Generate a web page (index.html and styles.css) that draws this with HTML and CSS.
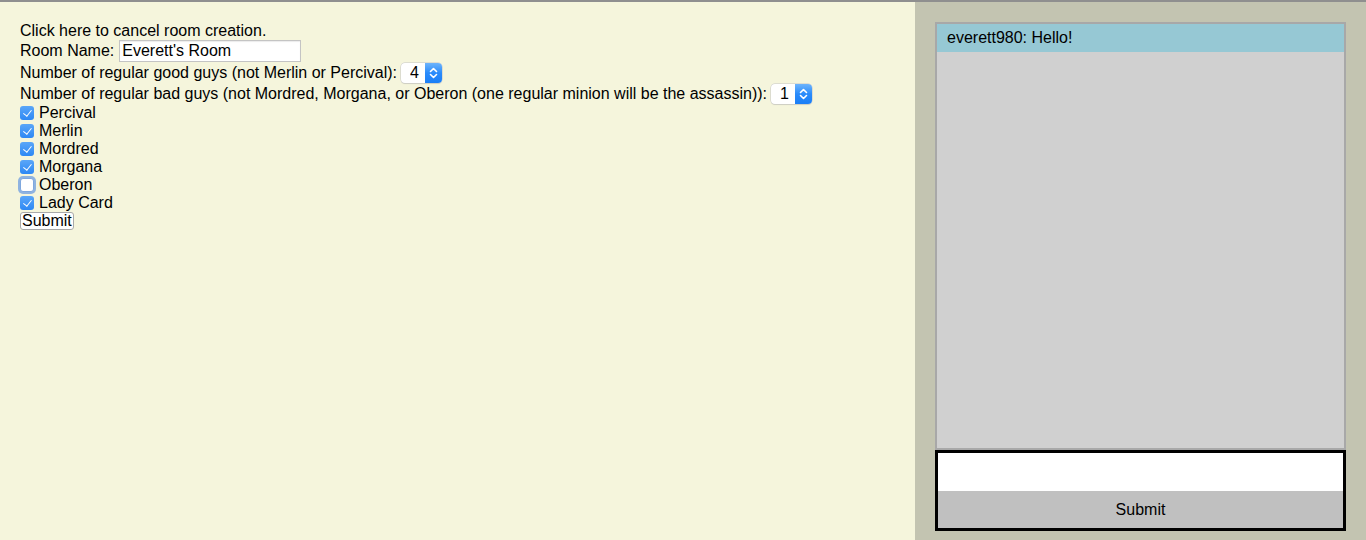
FILE: index.html
```html
<!DOCTYPE html>
<html>
<head>
<meta charset="utf-8">
<title>Create Room</title>
<link rel="stylesheet" href="styles.css">
</head>
<body>
<div class="page">
  <main class="main">
    <div class="row row-text"><a class="cancel">Click here to cancel room creation.</a></div>
    <div class="row row-input">
      <span>Room Name:</span>
      <input class="text-input" type="text" value="Everett's Room">
    </div>
    <div class="row row-select">
      <span>Number of regular good guys (not Merlin or Percival):</span>
      <span class="sel">
        <select class="sel-native"><option>4</option></select>
        <span class="sel-arrow"><svg width="17" height="20" viewBox="0 0 17 20"><path d="M5.5 8.5 L8.5 5.5 L11.5 8.5 M5.5 11.5 L8.5 14.5 L11.5 11.5" fill="none" stroke="#fff" stroke-width="1.6" stroke-linecap="round" stroke-linejoin="round"/></svg></span>
      </span>
    </div>
    <div class="row row-select">
      <span>Number of regular bad guys (not Mordred, Morgana, or Oberon (one regular minion will be the assassin)):</span>
      <span class="sel">
        <select class="sel-native"><option>1</option></select>
        <span class="sel-arrow"><svg width="17" height="20" viewBox="0 0 17 20"><path d="M5.5 8.5 L8.5 5.5 L11.5 8.5 M5.5 11.5 L8.5 14.5 L11.5 11.5" fill="none" stroke="#fff" stroke-width="1.6" stroke-linecap="round" stroke-linejoin="round"/></svg></span>
      </span>
    </div>
    <label class="row row-check"><input class="cb" type="checkbox" checked><span>Percival</span></label>
    <label class="row row-check"><input class="cb" type="checkbox" checked><span>Merlin</span></label>
    <label class="row row-check"><input class="cb" type="checkbox" checked><span>Mordred</span></label>
    <label class="row row-check"><input class="cb" type="checkbox" checked><span>Morgana</span></label>
    <label class="row row-check"><input class="cb cb-focus" type="checkbox"><span>Oberon</span></label>
    <label class="row row-check"><input class="cb" type="checkbox" checked><span>Lady Card</span></label>
    <div class="row row-btn"><button class="btn" type="button">Submit</button></div>
  </main>
  <aside class="side">
    <div class="log">
      <div class="msg">everett980: Hello!</div>
    </div>
    <form class="chatform">
      <input class="chat-input" type="text">
      <button class="chat-submit" type="button">Submit</button>
    </form>
  </aside>
</div>
</body>
</html>
```

FILE: styles.css
```css
* { box-sizing: border-box; }
html, body {
  margin: 0;
  padding: 0;
  height: 100%;
}
body {
  font-family: "Liberation Sans", Arial, sans-serif;
  font-size: 16px;
  color: #000;
}
.page {
  display: flex;
  height: 540px;
  border-top: 2px solid #8f8f8f;
}
.main {
  width: 915px;
  flex: 0 0 915px;
  background: #f5f5dc;
  padding: 20px 20px;
  line-height: 18px;
}
.row {
  display: flex;
  align-items: center;
  gap: 4px;
  white-space: nowrap;
}
.row-text { height: 18px; }
.row-input { height: 22px; }
.row-select { height: 21px; }
.row-check { height: 18px; gap: 5px; }
.row-btn { height: 18px; }
.cancel { color: #000; cursor: pointer; }

.text-input {
  width: 182px;
  height: 22px;
  margin: 0 0 0 1px;
  padding: 0 2px 0 2px;
  border: 1px solid #c4c4c4;
  box-shadow: inset 0 1px 1px rgba(0,0,0,0.08);
  background: #fff;
  font-family: "Liberation Sans", Arial, sans-serif;
  font-size: 16px;
  color: #000;
  outline: none;
}

.sel {
  display: inline-flex;
  height: 20px;
  border-radius: 4px;
  background: #fff;
  box-shadow: 0 0 0 0.5px #c6c6c6, 0 1px 1px rgba(0,0,0,0.12);
  overflow: hidden;
}
.sel-native {
  appearance: none;
  -webkit-appearance: none;
  width: 24px;
  height: 20px;
  border: none;
  background: transparent;
  padding: 0 0 0 9px;
  margin: 0;
  font-family: "Liberation Sans", Arial, sans-serif;
  font-size: 16px;
  color: #000;
  outline: none;
}
.sel-arrow {
  display: block;
  width: 17px;
  height: 20px;
  background: linear-gradient(#6db4fb, #2a8bfb 50%, #1a7ef6);
}
.sel-arrow svg { display: block; }

.cb {
  appearance: none;
  -webkit-appearance: none;
  position: relative;
  width: 14px;
  height: 14px;
  margin: 0;
  border-radius: 3px;
  background: linear-gradient(#5aa6f8, #2d88f4);
  border: none;
  flex: 0 0 14px;
}
.cb:checked::after {
  content: "";
  position: absolute;
  left: 5px;
  top: 2px;
  width: 3.5px;
  height: 7px;
  border-right: 1.8px solid #fff;
  border-bottom: 1.8px solid #fff;
  transform: rotate(38deg);
}
.cb:not(:checked) {
  background: #fff;
  border: 1px solid #7fa8de;
}
.cb-focus {
  box-shadow: 0 0 0 2px rgba(108, 156, 226, 0.75);
}

.btn {
  height: 18px;
  padding: 0 1px;
  margin: 0;
  border: 1px solid #a9a9a9;
  border-radius: 3px;
  background: #fff;
  font-family: "Liberation Sans", Arial, sans-serif;
  font-size: 16px;
  line-height: 14px;
  color: #000;
}

.side {
  flex: 1 1 auto;
  background: #c3c4b1;
  padding: 20px 20px;
}
.log {
  width: 411px;
  height: 428px;
  border: 2px solid #a8a8a8;
  background: #d0d0d0;
}
.msg {
  background: #96c8d4;
  padding: 5px 10px;
  line-height: 18px;
}
.chatform {
  width: 411px;
  margin: 0;
  border: 3px solid #000;
  display: flex;
  flex-direction: column;
}
.chat-input {
  height: 38px;
  border: none;
  margin: 0;
  padding: 0 4px;
  background: #fff;
  outline: none;
  font-family: "Liberation Sans", Arial, sans-serif;
  font-size: 16px;
}
.chat-submit {
  height: 37px;
  border: none;
  margin: 0;
  background: #c0c0c0;
  font-family: "Liberation Sans", Arial, sans-serif;
  font-size: 16px;
  color: #000;
}
```
